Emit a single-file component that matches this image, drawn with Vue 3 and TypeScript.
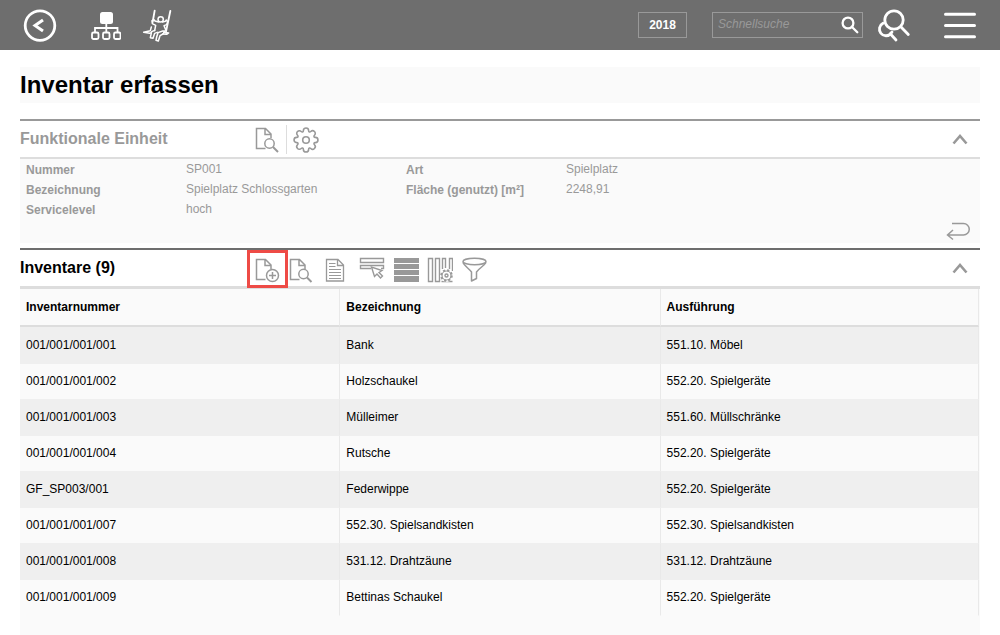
<script setup lang="ts">
import { ref } from 'vue'

interface Item {
  number: string
  name: string
  kind: string
}

const year = '2018'
const query = ref('')
const unitOpen = ref(true)
const listOpen = ref(true)

const details: { label: string; value: string }[] = [
  { label: 'Nummer', value: 'SP001' },
  { label: 'Art', value: 'Spielplatz' },
  { label: 'Bezeichnung', value: 'Spielplatz Schlossgarten' },
  { label: 'Fläche (genutzt) [m²]', value: '2248,91' },
  { label: 'Servicelevel', value: 'hoch' },
]

const items: Item[] = [
  { number: '001/001/001/001', name: 'Bank', kind: '551.10. Möbel' },
  { number: '001/001/001/002', name: 'Holzschaukel', kind: '552.20. Spielgeräte' },
  { number: '001/001/001/003', name: 'Mülleimer', kind: '551.60. Müllschränke' },
  { number: '001/001/001/004', name: 'Rutsche', kind: '552.20. Spielgeräte' },
  { number: 'GF_SP003/001', name: 'Federwippe', kind: '552.20. Spielgeräte' },
  { number: '001/001/001/007', name: '552.30. Spielsandkisten', kind: '552.30. Spielsandkisten' },
  { number: '001/001/001/008', name: '531.12. Drahtzäune', kind: '531.12. Drahtzäune' },
  { number: '001/001/001/009', name: 'Bettinas Schaukel', kind: '552.20. Spielgeräte' },
]
</script>

<template>
  <div class="page">
    <header class="topbar">
      <nav class="nav">
        <button type="button" class="icon-btn" aria-label="Zurück">
          <svg width="34" height="34" viewBox="0 0 34 34" fill="none" stroke="#fff">
            <circle cx="17" cy="16.600" r="14.800" stroke-width="2.800" />
            <path d="M20 11L12 16.500l8 5.500" stroke-width="3" />
          </svg>
        </button>
        <button type="button" class="icon-btn tree" aria-label="Struktur">
          <svg width="30" height="30" viewBox="0 0 30 30" fill="none" stroke="#fff" stroke-width="1.800">
            <rect x="9" y="1" width="13" height="12" rx="2.500" fill="#fff" stroke="none" />
            <path d="M15.300 12v9M4 21v-4h22.500v4" />
            <rect x="1" y="21.500" width="6.500" height="6.500" rx="1.500" />
            <rect x="12" y="21.500" width="6.500" height="6.500" rx="1.500" />
            <rect x="23" y="21.500" width="6.500" height="6.500" rx="1.500" />
          </svg>
        </button>
        <button type="button" class="icon-btn swing" aria-label="Spielplatz">
          <svg width="30" height="34" viewBox="0 0 90 102" fill="none" stroke="#fff" stroke-width="4.500" stroke-linejoin="round" stroke-linecap="round">
            <path d="M38 5l-6 34M85 6L72 68" stroke-width="5.500" />
            <circle cx="56" cy="31" r="8" />
            <path d="M50 39l-11-3-3-4-6 3 1 9 10 5-3 16" />
            <path d="M62 39l8-2 3-4 4 5-3 9-8 3 6 14" />
            <path d="M5 70l20-5 3-11M5 70l18 3 5-2M66 70l14 2-6 4-12-1" />
            <path d="M38 64l-9 4-4 18 8 2 5-15 8-3" />
            <path d="M62 66l-14 5-4 13-2 10 7 2 5-16 9-5 5-9z" />
          </svg>
        </button>
      </nav>
      <button type="button" class="year">{{ year }}</button>
      <form class="search" role="search" @submit.prevent>
        <input v-model="query" type="text" placeholder="Schnellsuche" aria-label="Schnellsuche" />
        <button type="submit" class="icon-btn" aria-label="Suchen">
          <svg width="18" height="18" viewBox="0 0 18 18" fill="none" stroke="#fff" stroke-width="2.300" stroke-linecap="round">
            <circle cx="7" cy="7" r="5.400" />
            <path d="M11 11l5.300 5.300" />
          </svg>
        </button>
      </form>
      <button type="button" class="icon-btn" aria-label="Erweiterte Suche">
        <svg width="34" height="34" viewBox="0 0 34 34" fill="none" stroke="#fff" stroke-width="2.800" stroke-linecap="round">
          <circle cx="17" cy="12" r="9.200" />
          <path d="M23.800 18.800l7.500 7.700M6 15.300A6.600 6.600 0 1 0 14 25.500" />
          <path d="M13.500 26l5.500 6M13.500 25.500l1.500-1.500" />
        </svg>
      </button>
      <button type="button" class="icon-btn menu" aria-label="Menü">
        <svg width="34" height="28" viewBox="0 0 34 28" stroke="#fff" stroke-width="3" stroke-linecap="round">
          <path d="M2.500 3.300h29M2.500 14.500h29M2.500 25.800h29" />
        </svg>
      </button>
    </header>

    <main class="content">
      <h1>Inventar erfassen</h1>

      <section class="panel unit">
        <div class="head">
          <h2>Funktionale Einheit</h2>
          <div class="tools">
            <button type="button" class="tool" aria-label="Anzeigen">
              <svg width="26" height="26" viewBox="0 0 26 26" fill="none" stroke="#999" stroke-width="1.500">
                <path d="M11.500 21.500h-9v-20h9l5.500 5.500v4M11 1.500v6h6" />
                <circle cx="15.500" cy="16.500" r="4.700" />
                <path d="M19 20l5 5" stroke-width="2" />
              </svg>
            </button>
            <span class="divider"></span>
            <button type="button" class="tool" aria-label="Einstellungen">
              <svg width="26" height="26" viewBox="0 0 26 26" fill="none" stroke="#999" stroke-width="1.600" stroke-linejoin="round">
                <path d="M10.400 3.600C10.400 .200 15.600 .200 15.600 3.600C15.600 5.200 16.900 5.400 17.800 4.500C20.200 2.100 23.900 5.800 21.500 8.200C20.600 9.100 20.800 10.400 22.400 10.400C25.800 10.400 25.800 15.600 22.400 15.600C20.800 15.600 20.600 16.900 21.500 17.800C23.900 20.200 20.200 23.900 17.800 21.500C16.900 20.600 15.600 20.800 15.600 22.400C15.600 25.800 10.400 25.800 10.400 22.400C10.400 20.800 9.100 20.600 8.200 21.500C5.800 23.900 2.100 20.200 4.500 17.800C5.400 16.900 5.200 15.600 3.600 15.600C.200 15.600 .200 10.400 3.600 10.400C5.200 10.400 5.400 9.100 4.500 8.200C2.100 5.800 5.800 2.100 8.200 4.500C9.100 5.400 10.400 5.200 10.400 3.600Z" />
                <circle cx="13" cy="13" r="3.300" />
              </svg>
            </button>
          </div>
          <button type="button" class="toggle" aria-label="Einheit ein- oder ausklappen" :aria-expanded="unitOpen" @click="unitOpen = !unitOpen">
            <svg width="16" height="12" viewBox="0 0 16 12" fill="none" stroke="#999" stroke-width="2.600">
              <path d="M1.500 10.500L8 3l6.500 7.500" />
            </svg>
          </button>
        </div>
        <div v-if="unitOpen" class="unit-body">
          <dl>
            <template v-for="d in details" :key="d.label">
              <dt>{{ d.label }}</dt>
              <dd>{{ d.value }}</dd>
            </template>
          </dl>
          <button type="button" class="icon-btn return" aria-label="Zurück zur Einheit">
            <svg width="26" height="20" viewBox="0 0 26 20" fill="none" stroke="#999" stroke-width="1.500">
              <path d="M7 2.500H18.500a5.500 5.500 0 0 1 0 11.500H2.500M8 9L2.500 14l5.500 4.500" />
            </svg>
          </button>
        </div>
      </section>

      <section class="panel list">
        <div class="head">
          <h2>Inventare (9)</h2>
          <div class="tools">
            <button type="button" class="tool marked" aria-label="Neu">
              <svg width="26" height="26" viewBox="0 0 26 26" fill="none" stroke="#999" stroke-width="1.500">
                <path d="M11.500 22.500h-9v-20h9l5.500 5.500v4M11 2.500v6h6" />
                <circle cx="18.500" cy="18.500" r="6" />
                <path d="M18.500 15v7M15 18.500h7" />
              </svg>
            </button>
            <button type="button" class="tool" aria-label="Anzeigen">
              <svg width="26" height="26" viewBox="0 0 26 26" fill="none" stroke="#999" stroke-width="1.500">
                <path d="M11.500 22.500h-9v-20h9l5.500 5.500v4M11 2.500v6h6" />
                <circle cx="15.500" cy="17" r="4.700" />
                <path d="M19 20.500l4.500 4.500" stroke-width="2" />
              </svg>
            </button>
            <button type="button" class="tool" aria-label="Bericht">
              <svg width="26" height="26" viewBox="0 0 26 26" fill="none" stroke="#999" stroke-width="1.300">
                <path d="M4.500 2.500h11.500l5.500 5.500v16H4.500zM15.500 2.500v6h6" />
                <path d="M7 6.500h6.500M7 9.500h6.500M7 12.500h12M7 15.500h12M7 18.500h12M7 21.500h12" stroke-width="1" />
              </svg>
            </button>
            <button type="button" class="tool second" aria-label="Auswählen">
              <svg width="26" height="26" viewBox="0 0 26 26" fill="none" stroke="#999" stroke-width="1.400">
                <path d="M1.500 1.500h23v4h-23zM12 11.500H1.500v-3h23v3H22" />
                <path d="M12.500 10l3 9.500 2.500-2.500 3.500 4 2-2-3.500-3.500 3-2z" />
              </svg>
            </button>
            <button type="button" class="tool" aria-label="Zeilenansicht">
              <svg width="26" height="26" viewBox="0 0 26 26" fill="#999">
                <path d="M1 1h25v5H1zM1 7h25v5H1zM1 13h25v5H1zM1 19h25v6H1z" />
              </svg>
            </button>
            <button type="button" class="tool" aria-label="Spalten einrichten">
              <svg width="26" height="26" viewBox="0 0 26 26" fill="none" stroke="#999" stroke-width="1.400">
                <path d="M1.500 1.500h4v23h-4zM8.500 1.500h4v23h-4zM15.500 12V1.500h3V11M22.500 12V1.500h3V14M14.500 24.500h11" />
                <circle cx="19.500" cy="18.500" r="6.500" fill="#fff" stroke="none" />
                <circle cx="19.500" cy="18.500" r="5.300" stroke-width="2" stroke-dasharray="2.200 1.963" />
                <circle cx="19.500" cy="18.500" r="4.500" stroke-width="1.200" />
                <circle cx="19.500" cy="18.500" r="1.500" />
              </svg>
            </button>
            <button type="button" class="tool" aria-label="Filtern">
              <svg width="26" height="26" viewBox="0 0 26 26" fill="none" stroke="#999" stroke-width="1.500" stroke-linejoin="round">
                <ellipse cx="13.500" cy="4.500" rx="11.500" ry="3.200" />
                <path d="M2 5.500c1 3 6 6 8.500 9.500v9l5-2.500V15c3-4 8-6.500 9.500-9.500" />
              </svg>
            </button>
          </div>
          <button type="button" class="toggle" aria-label="Inventare ein- oder ausklappen" :aria-expanded="listOpen" @click="listOpen = !listOpen">
            <svg width="16" height="12" viewBox="0 0 16 12" fill="none" stroke="#999" stroke-width="2.600">
              <path d="M1.500 10.500L8 3l6.500 7.500" />
            </svg>
          </button>
        </div>
        <div v-if="listOpen" class="list-body">
          <table>
            <thead>
              <tr>
                <th scope="col">Inventarnummer</th>
                <th scope="col">Bezeichnung</th>
                <th scope="col">Ausführung</th>
              </tr>
            </thead>
            <tbody>
              <tr v-for="item in items" :key="item.number">
                <td>{{ item.number }}</td>
                <td>{{ item.name }}</td>
                <td>{{ item.kind }}</td>
              </tr>
            </tbody>
          </table>
        </div>
      </section>
    </main>
  </div>
</template>

<style>
body {
  margin: 0;
  background: #fff;
}
</style>

<style scoped>
.page {
  display: flex;
  flex-direction: column;
  min-height: 100vh;
  font-family: "Liberation Sans", Arial, sans-serif;
  font-size: 12px;
  color: #000;
}
button {
  font: inherit;
  cursor: pointer;
}
svg {
  display: block;
}
.topbar {
  display: flex;
  align-items: center;
  box-sizing: border-box;
  height: 50px;
  padding: 0 23px;
  background: #6e6e6e;
}
.nav {
  display: flex;
  align-items: center;
  flex: 1;
  padding-top: 2px;
}
.icon-btn,
.tool,
.toggle {
  padding: 0;
  border: 0;
  background: none;
}
.tree {
  margin-left: 34px;
}
.swing {
  margin-left: 21px;
}
.year {
  width: 49px;
  height: 26px;
  padding: 0;
  border: 1px solid #999;
  background: none;
  color: #fff;
  font-weight: bold;
}
.search {
  display: flex;
  align-items: center;
  box-sizing: border-box;
  width: 151px;
  height: 26px;
  margin: 0 14px 0 25px;
  padding-right: 3px;
  border: 1px solid #999;
}
.search input {
  flex: 1;
  min-width: 0;
  padding: 0 0 2px 5px;
  border: 0;
  outline: 0;
  background: none;
  color: #fff;
  font: inherit;
}
.search input::placeholder {
  color: #999;
  font-style: italic;
  opacity: 1;
}
.menu {
  margin-left: 32px;
}
.content {
  display: flex;
  flex-direction: column;
  flex: 1;
  padding: 17px 20px 0;
}
h1 {
  margin: 0 0 16px;
  background: #fafafa;
  font-size: 24px;
  line-height: 36px;
}
.head {
  display: flex;
  align-items: stretch;
  height: 36px;
  border-bottom: 2px solid #ddd;
}
h2 {
  width: 230px;
  margin: 0;
  font-size: 16px;
  line-height: 36px;
}
.tools {
  display: flex;
  flex: 1;
}
.tool {
  position: relative;
  display: flex;
  justify-content: center;
  width: 34px;
  padding-top: 7px;
}
.unit .tool {
  padding-top: 6px;
}
.second {
  margin-left: 3px;
}
.divider {
  width: 1px;
  margin: 4px 2px 3px;
  background: #ddd;
}
.marked::after {
  content: "";
  position: absolute;
  inset: 0 -4px -2px -3px;
  border: 3px solid #ee4b46;
}
.toggle {
  padding: 0 12px;
}
.unit {
  margin-bottom: 5px;
  border-top: 2px solid #999;
  color: #999;
}
.unit-body {
  background: #fafafa;
}
dl {
  display: grid;
  grid-template-columns: 160px 220px 160px 1fr;
  margin: 0;
  padding: 0 6px;
  line-height: 20px;
}
dt {
  padding-top: 1px;
  height: 19px;
  font-weight: bold;
}
dd {
  margin: 0;
  height: 20px;
}
.return {
  display: block;
  margin-left: auto;
  padding: 2px 9px 2px;
}
.list {
  display: flex;
  flex-direction: column;
  flex: 1;
  border-top: 2px solid #6e6e6e;
}
.list .head {
  border-bottom-width: 3px;
}
.list-body {
  flex: 1;
  background: #fafafa;
}
table {
  width: calc(100% - 1px);
  table-layout: fixed;
  border-collapse: separate;
  border-spacing: 0;
}
th,
td {
  box-sizing: border-box;
  height: 36px;
  padding: 0 6px 1px;
  border-right: 1px solid #e9e9e9;
  border-bottom: 1px solid #efefef;
  text-align: left;
}
th {
  height: 38px;
  padding-bottom: 0;
  border-bottom: 2px solid #ddd;
}
th:not(:last-child) {
  width: 33.4%;
}
tbody tr:first-child td {
  height: 37px;
}
tbody tr:nth-child(odd) {
  background: #efefef;
}
tbody tr:last-child td {
  border-bottom-color: #fafafa;
}
</style>
